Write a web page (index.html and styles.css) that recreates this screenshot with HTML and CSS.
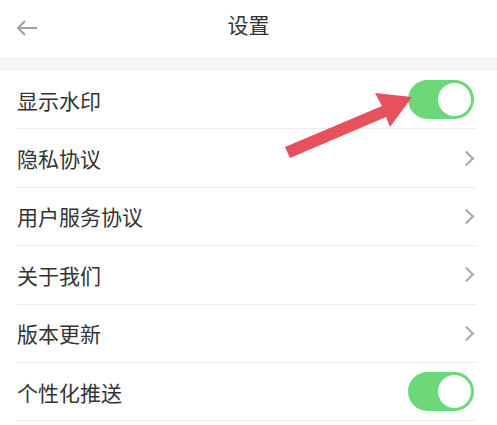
FILE: index.html
```
<!DOCTYPE html>
<html lang="zh-CN">
<head>
    <meta charset="UTF-8">
    <meta name="viewport" content="width=device-width, initial-scale=1.0">
    <title>设置</title>
    <link rel="stylesheet" href="styles.css">
</head>
<body>
    <div class="header">
        <span class="back-btn">
            <svg width="22" height="16" viewBox="0 0 22 16"><path d="M21 8H2M9 1L2 8l7 7" fill="none" stroke="#a0a0a0" stroke-width="2"/></svg>
        </span>
        <h1>设置</h1>
    </div>
    <div class="gap"></div>

    <div class="list">
        <div class="row">
            <span class="label">显示水印</span>
            <span class="switch on"><span class="knob"></span></span>
        </div>
        <div class="row">
            <span class="label">隐私协议</span>
            <span class="chevron"></span>
        </div>
        <div class="row">
            <span class="label">用户服务协议</span>
            <span class="chevron"></span>
        </div>
        <div class="row">
            <span class="label">关于我们</span>
            <span class="chevron"></span>
        </div>
        <div class="row">
            <span class="label">版本更新</span>
            <span class="chevron"></span>
        </div>
        <div class="row">
            <span class="label">个性化推送</span>
            <span class="switch on"><span class="knob"></span></span>
        </div>
    </div>

    <svg class="pointer" width="497" height="425" viewBox="0 0 497 425">
        <polygon points="285,147 382,106 375,93 412,97 390,127 386,117 290,158" fill="#e8505e"/>
    </svg>
</body>
</html>
```

FILE: styles.css
```
body {
    font-family: "Noto Sans CJK SC", "Noto Sans", sans-serif;
    background-color: #fff;
    margin: 0;
    padding: 0;
    color: #333;
}
.header {
    height: 57px;
    display: flex;
    align-items: center;
    justify-content: center;
    position: relative;
}
.back-btn {
    position: absolute;
    left: 16px;
    top: 17px;
}
h1 {
    margin: 0;
    font-size: 21px;
    font-weight: 400;
    color: #333;
    margin-top: -10px;
}
.gap {
    height: 14px;
    background-color: #f6f6f6;
}
.list {
    padding: 0 21px 0 17px;
}
.row {
    height: 57.4px;
    border-bottom: 1px solid #ececec;
    display: flex;
    align-items: center;
    justify-content: space-between;
}
.label {
    font-size: 21px;
    color: #333;
}
.chevron {
    width: 9px;
    height: 9px;
    border-top: 2px solid #a8a8a8;
    border-right: 2px solid #a8a8a8;
    transform: rotate(45deg);
    margin-right: 4px;
}
.switch {
    width: 66px;
    height: 39px;
    border-radius: 20px;
    background-color: #6cd87a;
    display: flex;
    align-items: center;
    justify-content: flex-end;
    padding: 3px;
    box-sizing: border-box;
    margin-right: 2px;
}
.knob {
    width: 33px;
    height: 33px;
    border-radius: 50%;
    background-color: #fff;
}
.pointer {
    position: absolute;
    left: 0;
    top: 0;
    pointer-events: none;
}
```
